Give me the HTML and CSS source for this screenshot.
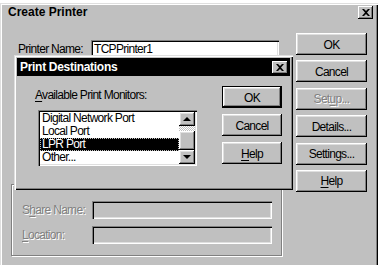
FILE: index.html
```html
<!DOCTYPE html>
<html lang="en">
<head>
    <meta charset="UTF-8">
    <title>Create Printer</title>
    <link rel="stylesheet" href="styles.css">
</head>
<body>

    <div class="window">
        <!-- Barre de titre principale -->
        <div class="titlebar">
            <span class="title">Create Printer</span>
            <span class="close">
                <svg width="8" height="7" viewBox="0 0 8 7"><path d="M0 0h2l2 2 2-2h2L5 3.5 8 7H6L4 5 2 7H0l3-3.5z" fill="#000"/></svg>
            </span>
        </div>

        <div class="content">
            <div class="main">
                <div class="name-row">
                    <span class="label">Printer <u>N</u>ame:</span>
                    <span class="field">TCPPrinter1</span>
                </div>

                <div class="group">
                    <div class="group-row">
                        <span class="label disabled">S<u>h</u>are Name:</span>
                        <span class="field field-off"></span>
                    </div>
                    <div class="group-row">
                        <span class="label disabled"><u>L</u>ocation:</span>
                        <span class="field field-off"></span>
                    </div>
                </div>
            </div>

            <div class="buttons">
                <span class="btn">OK</span>
                <span class="btn">Cancel</span>
                <span class="btn disabled">Set<u>u</u>p...</span>
                <span class="btn">Details...</span>
                <span class="btn">Settings...</span>
                <span class="btn"><u>H</u>elp</span>
            </div>
        </div>

        <!-- Fenetre Print Destinations par-dessus -->
        <div class="dialog">
            <div class="titlebar dark">
                <span class="title">Print Destinations</span>
                <span class="close small">
                    <svg width="8" height="7" viewBox="0 0 8 7"><path d="M0 0h2l2 2 2-2h2L5 3.5 8 7H6L4 5 2 7H0l3-3.5z" fill="#000"/></svg>
                </span>
            </div>

            <div class="dlg-body">
                <div class="dlg-main">
                    <div class="label"><u>A</u>vailable Print Monitors:</div>
                    <div class="listbox">
                        <div class="items">
                            <div class="item">Digital Network Port</div>
                            <div class="item">Local Port</div>
                            <div class="item selected">LPR Port</div>
                            <div class="item">Other...</div>
                        </div>
                        <div class="scrollbar">
                            <span class="sb-btn"><span class="arrow up"></span></span>
                            <span class="sb-track short"></span>
                            <span class="sb-thumb"></span>
                            <span class="sb-track"></span>
                            <span class="sb-btn"><span class="arrow down"></span></span>
                        </div>
                    </div>
                </div>

                <div class="dlg-buttons">
                    <span class="btn default">OK</span>
                    <span class="btn">Cancel</span>
                    <span class="btn"><u>H</u>elp</span>
                </div>
            </div>
        </div>
    </div>

</body>
</html>
```

FILE: styles.css
```css
/* Style general */
body {
    margin: 0;
    background: #fff;
    font-family: "Liberation Sans", Arial, sans-serif;
    font-size: 12px;
    letter-spacing: -0.7px;
    color: #000;
}
u {
    text-decoration-thickness: 1px;
    text-underline-offset: 2px;
}
.window {
    position: relative;
    width: 378px;
    height: 264px;
    box-sizing: border-box;
    background: #c0c0c0;
    box-shadow: inset 1px 1px #dfdfdf, inset 2px 2px #fff, inset -1px -1px #000, inset -2px -2px #808080;
}

/* Barres de titre */
.titlebar {
    display: flex;
    align-items: center;
    height: 18px;
    margin: 3px 5px 0 3px;
    padding-left: 5px;
}
.title {
    flex: 1;
    font-weight: bold;
    font-size: 12px;
    letter-spacing: 0;
}
.close {
    display: flex;
    align-items: center;
    justify-content: center;
    width: 15px;
    height: 13px;
    background: #c0c0c0;
    box-shadow: inset -1px -1px #000, inset 1px 1px #fff, inset -2px -2px #808080;
}
.titlebar.dark {
    margin: 0;
    padding-left: 3px;
    background: #000;
    color: #fff;
}
.titlebar.dark .title {
    letter-spacing: -0.3px;
}
.close.small {
    width: 16px;
    height: 13px;
    margin-right: 2px;
}

/* Contenu principal */
.content {
    display: flex;
    gap: 14px;
    padding: 12px 0 0 11px;
}
.main {
    width: 271px;
    padding-top: 6px;
}
.name-row, .group-row {
    display: flex;
    align-items: center;
}
.name-row {
    padding-left: 7px;
}
.label {
    line-height: 15px;
    white-space: nowrap;
}
.name-row .label {
    width: 73px;
    padding-top: 3px;
}
.field {
    box-sizing: border-box;
    width: 188px;
    height: 17px;
    padding: 2px 3px 0;
    line-height: 15px;
    background: #fff;
    box-shadow: inset 1px 1px #808080, inset 2px 2px #000, inset -1px -1px #fff, inset -2px -2px #dfdfdf;
}
.field-off {
    width: 180px;
    height: 18px;
    background: #c0c0c0;
}
.disabled {
    color: #808080;
    text-shadow: 1px 1px #fff;
}

/* Cadre Share / Location */
.group {
    display: flex;
    flex-direction: column;
    gap: 7px;
    box-sizing: border-box;
    height: 72px;
    margin-top: 127px;
    padding: 16px 0 0 10px;
    border: 1px solid #808080;
    box-shadow: inset 1px 1px #fff, 1px 1px #fff;
}
.group-row .label {
    width: 70px;
}

/* Boutons */
.buttons {
    display: flex;
    flex-direction: column;
    gap: 5.4px;
    width: 71px;
}
.btn {
    display: flex;
    align-items: center;
    justify-content: center;
    box-sizing: border-box;
    height: 22px;
    padding-top: 1px;
    background: #c0c0c0;
    box-shadow: inset -1px -1px #000, inset 1px 1px #fff, inset -2px -2px #808080, inset 2px 2px #dfdfdf;
}
.btn.default {
    border: 1px solid #000;
}

/* Fenetre Print Destinations */
.dialog {
    position: absolute;
    left: 14px;
    top: 52px;
    width: 279px;
    height: 135px;
    box-sizing: border-box;
    padding: 3px;
    background: #c0c0c0;
    box-shadow: inset 1px 1px #dfdfdf, inset 2px 2px #fff, inset -1px -1px #000, inset -2px -2px #808080;
}
.dlg-body {
    display: flex;
    padding: 10px 8px 0 18px;
}
.dlg-main {
    flex: 1;
    padding-top: 2px;
}
.dlg-buttons {
    display: flex;
    flex-direction: column;
    gap: 6px;
    width: 60px;
}
.listbox {
    display: flex;
    box-sizing: border-box;
    width: 159px;
    height: 56px;
    margin: 7px 0 0 3px;
    padding: 2px;
    background: #fff;
    box-shadow: inset 1px 1px #808080, inset 2px 2px #000, inset -1px -1px #fff, inset -2px -2px #dfdfdf;
}
.items {
    flex: 1;
}
.item {
    height: 13px;
    line-height: 13px;
    padding-left: 2px;
    white-space: nowrap;
}
.item.selected {
    background: #000;
    color: #fff;
    outline: 1px dotted #c0c0c0;
    outline-offset: -1px;
}

/* Barre de defilement */
.scrollbar {
    display: flex;
    flex-direction: column;
    width: 16px;
}
.sb-btn, .sb-thumb {
    display: flex;
    align-items: center;
    justify-content: center;
    height: 14px;
    background: #c0c0c0;
    box-shadow: inset -1px -1px #000, inset 1px 1px #fff, inset -2px -2px #808080, inset 2px 2px #dfdfdf;
}
.sb-thumb {
    height: 19px;
}
.sb-track {
    flex: 1;
    background: repeating-conic-gradient(#fff 0 25%, #c0c0c0 0 50%) 0 0 / 2px 2px;
}
.sb-track.short {
    flex: 0 0 5px;
}
.arrow {
    width: 0;
    height: 0;
    border-left: 4px solid transparent;
    border-right: 4px solid transparent;
}
.arrow.up {
    border-bottom: 4px solid #000;
}
.arrow.down {
    border-top: 4px solid #000;
}
```
